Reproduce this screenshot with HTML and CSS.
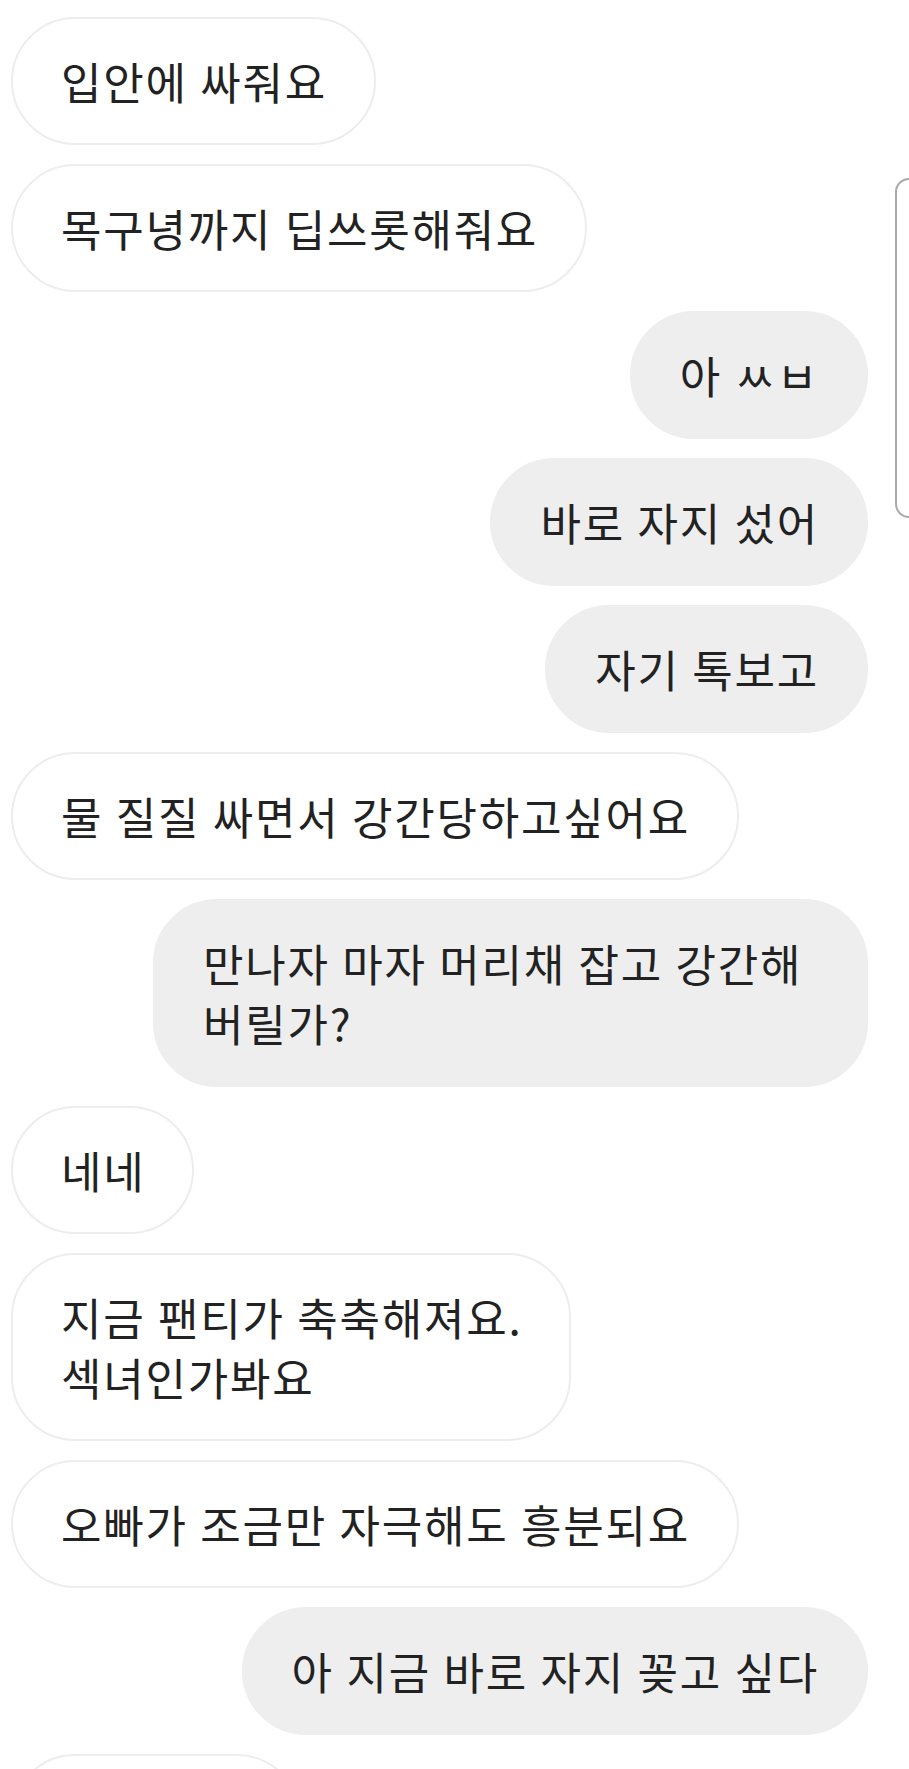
FILE: index.html
```html
<!DOCTYPE html>
<html lang="ko">
<head>
  <meta charset="UTF-8">
  <meta name="viewport" content="width=device-width, initial-scale=1.0">
  <title>대화</title>
  <link rel="stylesheet" href="styles.css">
</head>
<body>

  <div class="pantalla">
    <div class="chat">
      <!-- mensajes -->
      <div class="msg in"><div class="burbuja">입안에 싸줘요</div></div>
      <div class="msg in"><div class="burbuja">목구녕까지 딥쓰롯해줘요</div></div>
      <div class="msg out"><div class="burbuja">아 ㅆㅂ</div></div>
      <div class="msg out"><div class="burbuja">바로 자지 섰어</div></div>
      <div class="msg out"><div class="burbuja">자기 톡보고</div></div>
      <div class="msg in"><div class="burbuja">물 질질 싸면서 강간당하고싶어요</div></div>
      <div class="msg out"><div class="burbuja ancha">만나자 마자 머리채 잡고 강간해<br>버릴가?</div></div>
      <div class="msg in"><div class="burbuja">네네</div></div>
      <div class="msg in"><div class="burbuja">지금 팬티가 축축해져요.<br>섹녀인가봐요</div></div>
      <div class="msg in"><div class="burbuja">오빠가 조금만 자극해도 흥분되요</div></div>
      <div class="msg out"><div class="burbuja">아 지금 바로 자지 꽂고 싶다</div></div>
      <div class="msg in"><div class="burbuja corte">&nbsp;</div></div>
    </div>

    <div class="borde-panel"></div>
  </div>

</body>
</html>
```
FILE: styles.css
```css
body {
  font-family: "Noto Sans CJK KR", "Noto Sans", sans-serif;
  background-color: #fff;
  margin: 0;
  padding: 0;
}

.pantalla {
  position: relative;
  height: 1769px;
  overflow: hidden;
}

.chat {
  display: flex;
  flex-direction: column;
  gap: 19px;
  padding: 17px 41px 0 11px;
}

.msg {
  display: flex;
}

.msg.out {
  justify-content: flex-end;
}

.burbuja {
  font-size: 44px;
  line-height: 60px;
  letter-spacing: 1.75px;
  word-spacing: -1.5px;
  color: #222;
  padding: 32px 47px 32px 48px;
  border: 2px solid #ededed;
  border-radius: 64px;
  background-color: #fff;
  white-space: nowrap;
}

.out .burbuja {
  background-color: #eee;
  border-color: #eee;
}

.burbuja.ancha {
  width: 715px;
  box-sizing: border-box;
}

.burbuja.corte {
  width: 290px;
  box-sizing: border-box;
}

/* panel lateral cortado a la derecha */
.borde-panel {
  position: absolute;
  left: 895px;
  top: 178px;
  width: 40px;
  height: 340px;
  box-sizing: border-box;
  border: 2px solid #aaa;
  border-radius: 14px;
  background-color: #fff;
}
```
